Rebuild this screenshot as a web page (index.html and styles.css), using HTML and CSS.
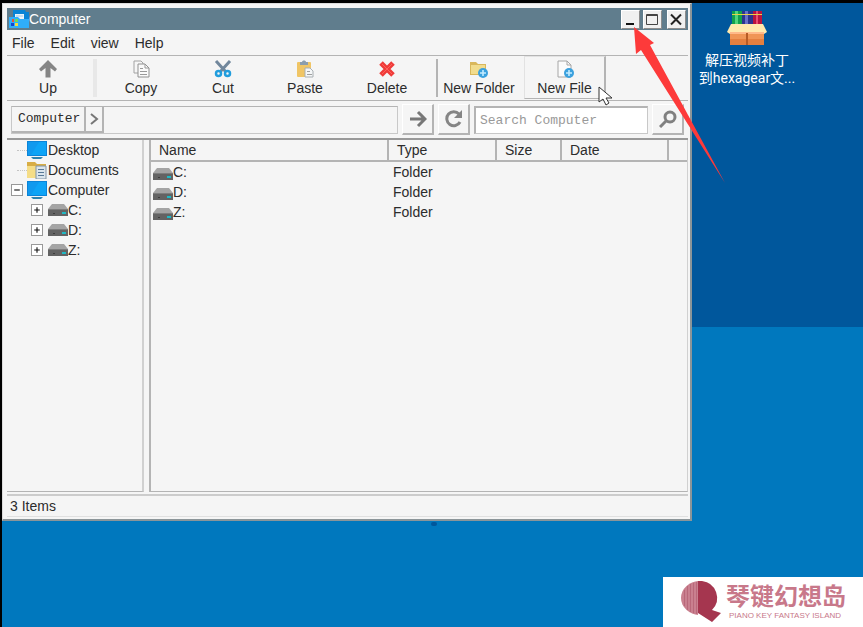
FILE: index.html
```html
<!DOCTYPE html>
<html lang="zh-CN">
  <head>
    <meta charset="UTF-8" />
    <meta name="viewport" content="width=device-width, initial-scale=1.0" />
    <title>Computer</title>
    <link rel="stylesheet" href="styles.css">
  </head>
  <body>
    <!-- shared icons -->
    <svg class="sprite" xmlns="http://www.w3.org/2000/svg">
      <symbol id="monitor" viewBox="0 0 20 18">
        <rect x="0" y="0" width="20" height="15" fill="#0b84d8" />
        <rect x="1" y="1" width="18" height="13" fill="#0ea4f6" />
        <path d="M1 1h11L4 14H1z" fill="#1199ee" />
        <path d="M4 16h12l-2 2H6z" fill="#2d83b0" />
      </symbol>
      <symbol id="drive" viewBox="0 0 20 12">
        <path d="M4 0h12l4 5H0z" fill="#a4a4a4" />
        <rect x="0" y="5" width="20" height="7" fill="#636363" />
        <rect x="0" y="5" width="20" height="1" fill="#7d7d7d" />
        <rect x="14" y="8" width="4" height="2" fill="#20b9c4" />
        <rect x="5" y="9" width="2" height="1" fill="#3d3d3d" />
      </symbol>
      <symbol id="plus-badge" viewBox="0 0 10 10">
        <circle cx="5" cy="5" r="5" fill="#3ba1de" />
        <path d="M5 2v6M2 5h6" stroke="#c4ecff" stroke-width="1.6" />
      </symbol>
    </svg>

    <main class="desktop">
      <section class="window">
        <header class="titlebar">
          <svg class="app-icon" viewBox="0 0 20 20">
            <path d="M4 1h12l1 2h3v12H4z" fill="#0784d6" />
            <path d="M6 5h9v5H6z" fill="#e7f3fb" />
            <path d="M7 7h7" stroke="#9ccbe8" />
            <path d="M0 8h9l2 2h9v9H0z" fill="#30aefa" />
            <path d="M3 10h2v3H3z" fill="#e5553b" />
            <path d="M6 10h3v3H6z" fill="#6bdc58" />
            <path d="M2 14h3v3H2z" fill="#1446cf" />
            <path d="M6 14h3v3H6z" fill="#f4dc3d" />
          </svg>
          <h1>Computer</h1>
          <div class="controls">
            <button type="button" aria-label="Minimize"><svg viewBox="0 0 16 16"><path d="M4 13h8" stroke="#111" stroke-width="2" /></svg></button>
            <button type="button" aria-label="Maximize"><svg viewBox="0 0 16 16"><path d="M2.500 3.500h11v10h-11zM2 4.500h12" fill="none" stroke="#444" /></svg></button>
            <button type="button" aria-label="Close" class="close"><svg viewBox="0 0 16 16"><path d="M3 3.500l10 10M13 3.500l-10 10" stroke="#222" stroke-width="2" /></svg></button>
          </div>
        </header>

        <nav class="menubar">
          <button type="button">File</button>
          <button type="button">Edit</button>
          <button type="button">view</button>
          <button type="button">Help</button>
        </nav>

        <div class="toolbar">
          <button type="button" class="tool">
            <svg viewBox="0 0 18 18"><path d="M9 0l9 9-2 2.500-4.500-3.500v9.500h-5V8L2 11.500 0 9z" fill="#858585" /></svg>
            Up
          </button>
          <span class="divider soft"></span>
          <button type="button" class="tool">
            <svg viewBox="0 0 18 18">
              <path d="M2 1h7l2 2v10H2z" fill="#f6f6f6" stroke="#a2a2a2" />
              <path d="M6 4h7l4 4v9H6z" fill="#fafafa" stroke="#909090" />
              <path d="M13 4v4h4M8 8.500h3M8 11.500h7M8 14.500h7" fill="none" stroke="#999" />
            </svg>
            Copy
          </button>
          <button type="button" class="tool">
            <svg viewBox="0 0 18 18">
              <path d="M2 1l10 11M16 1L6 12" stroke="#71879c" stroke-width="3" />
              <circle cx="4.500" cy="13.500" r="2.500" fill="none" stroke="#219ddd" stroke-width="2.500" />
              <circle cx="13.500" cy="13.500" r="2.500" fill="none" stroke="#219ddd" stroke-width="2.500" />
            </svg>
            Cut
          </button>
          <button type="button" class="tool">
            <svg viewBox="0 0 18 18">
              <rect x="1" y="2" width="14" height="15" rx="1" fill="#f0c565" />
              <path d="M4 2h2c0-2 4-2 4 0h2v3H4z" fill="#8b9dad" />
              <path d="M9 8h5l3 3v6H9z" fill="#f5f7f8" stroke="#a9afb3" />
              <path d="M11 11.500h3M11 14.500h5" stroke="#a0a0a0" />
            </svg>
            Paste
          </button>
          <button type="button" class="tool">
            <svg viewBox="0 0 18 18"><path d="M3 3l12 12M15 3L3 15" stroke="#ef3b39" stroke-width="5" /><path d="M4 4l10 10M14 4L4 14" stroke="#ff6059" stroke-width="1" /></svg>
            Delete
          </button>
          <span class="divider"></span>
          <button type="button" class="tool">
            <svg viewBox="0 0 18 18">
              <path d="M0 2h6l2 2h8v11H0z" fill="#d9b75b" />
              <path d="M1 5h14v9H1z" fill="#f1dc8d" />
              <use href="#plus-badge" x="8" y="8" width="10" height="10" />
            </svg>
            New Folder
          </button>
          <button type="button" class="tool hovered">
            <svg viewBox="0 0 18 18">
              <path d="M2 1h9l4 4v12H2z" fill="#fbfbfb" stroke="#a6a6a6" />
              <path d="M11 1v4h4" fill="none" stroke="#a6a6a6" />
              <use href="#plus-badge" x="8" y="8" width="10" height="10" />
            </svg>
            New File
          </button>
        </div>

        <div class="addressbar">
          <div class="path">
            <button type="button" class="crumb">Computer</button>
            <button type="button" class="crumb chevron" aria-label="Expand path"><svg viewBox="0 0 10 12"><path d="M2 1l6 5-6 5" fill="none" stroke="#777" stroke-width="2" /></svg></button>
          </div>
          <button type="button" class="square" aria-label="Go"><svg viewBox="0 0 18 18"><path d="M1 9h14M9 2l7 7-7 7" fill="none" stroke="#777" stroke-width="3" /></svg></button>
          <button type="button" class="square" aria-label="Refresh"><svg viewBox="0 0 18 18"><path d="M15 12a7 7 0 1 1-1-8" fill="none" stroke="#858585" stroke-width="3" /><path d="M17 0v8H9z" fill="#858585" /></svg></button>
          <input type="search" class="search" placeholder="Search Computer" aria-label="Search Computer" />
          <button type="button" class="square" aria-label="Search"><svg viewBox="0 0 18 18"><circle cx="11" cy="7" r="5" fill="none" stroke="#808080" stroke-width="3" /><path d="M7 11l-6 6" stroke="#808080" stroke-width="3" /></svg></button>
        </div>

        <div class="panes">
          <ul class="tree">
            <li><span class="stub"></span><svg class="node-icon"><use href="#monitor" /></svg>Desktop</li>
            <li>
              <span class="stub"></span>
              <svg class="node-icon" viewBox="0 0 20 18">
                <path d="M0 1h8l2 2h9v14H0z" fill="#d8ad45" />
                <path d="M0 5h17v12H0z" fill="#f5dd87" />
                <path d="M9 5h10v13H9z" fill="#dbe5ed" stroke="#8294a5" />
                <path d="M11 8.500h6M11 11.500h6M11 14.500h6" stroke="#587997" />
              </svg>Documents
            </li>
            <li class="root"><button type="button" class="toggle" aria-label="Collapse Computer"><svg viewBox="0 0 9 9"><path d="M2 4.500h5" stroke="#111" /></svg></button><svg class="node-icon"><use href="#monitor" /></svg>Computer</li>
            <li class="child"><button type="button" class="toggle" aria-label="Expand C:"><svg viewBox="0 0 9 9"><path d="M2 4.500h5M4.500 2v5" stroke="#111" /></svg></button><svg class="drive-icon"><use href="#drive" /></svg>C:</li>
            <li class="child"><button type="button" class="toggle" aria-label="Expand D:"><svg viewBox="0 0 9 9"><path d="M2 4.500h5M4.500 2v5" stroke="#111" /></svg></button><svg class="drive-icon"><use href="#drive" /></svg>D:</li>
            <li class="child"><button type="button" class="toggle" aria-label="Expand Z:"><svg viewBox="0 0 9 9"><path d="M2 4.500h5M4.500 2v5" stroke="#111" /></svg></button><svg class="drive-icon"><use href="#drive" /></svg>Z:</li>
          </ul>

          <div class="list">
            <table>
              <thead>
                <tr>
                  <th>Name</th>
                  <th class="col-type">Type</th>
                  <th class="col-size">Size</th>
                  <th class="col-date">Date</th>
                  <th class="col-rest"></th>
                </tr>
              </thead>
              <tbody>
                <tr><td><svg class="drive-icon"><use href="#drive" /></svg>C:</td><td>Folder</td><td></td><td></td><td></td></tr>
                <tr><td><svg class="drive-icon"><use href="#drive" /></svg>D:</td><td>Folder</td><td></td><td></td><td></td></tr>
                <tr><td><svg class="drive-icon"><use href="#drive" /></svg>Z:</td><td>Folder</td><td></td><td></td><td></td></tr>
              </tbody>
            </table>
          </div>
        </div>

        <footer class="statusbar">3 Items</footer>
      </section>

      <a href="#" class="shortcut">
        <svg viewBox="0 0 40 36">
          <rect x="5" y="1" width="10" height="20" fill="#13a04c" />
          <rect x="8" y="1" width="3" height="20" fill="#52d57c" />
          <rect x="15" y="1" width="11" height="20" fill="#2c348f" />
          <rect x="18" y="1" width="3" height="20" fill="#6970c9" />
          <rect x="26" y="1" width="9" height="20" fill="#b9143e" />
          <rect x="29" y="1" width="2" height="20" fill="#e94c70" />
          <path d="M5 4.500h30" stroke="#e6d04b" />
          <path d="M3 21h34v14H3z" fill="#f09556" />
          <path d="M3 29h34v6H3z" fill="#e47f3f" />
          <path d="M4 14h32l4 8-3 2-3-2H6l-3 2-3-2z" fill="#ffe9ad" />
          <path d="M3 23h34" stroke="#ffb98a" stroke-width="2" />
          <path d="M20 23v12" stroke="#b75b25" stroke-width="2" />
        </svg>
        <span>解压视频补丁<br>到hexagear文...</span>
      </a>

      <span class="speck"></span>
      <svg class="cursor" viewBox="0 0 16 20"><path d="M1 1v15l4-3 3 6 3-2-3-5h6z" fill="#fff" stroke="#333" /></svg>
      <svg class="pointer" viewBox="0 0 92 156"><path d="M1 0l20 16-4 2 75 138L8 23l-5 4z" fill="#fd3a3a" /></svg>

      <aside class="watermark">
        <svg viewBox="0 0 40 44">
          <defs><clipPath id="half"><rect x="0" y="0" width="17" height="44" /></clipPath></defs>
          <path d="M17 1h4a17 17 0 0 1 10 29l9 3-9 9-14-9z" fill="#a5364f" />
          <ellipse cx="19" cy="18" rx="19" ry="17" fill="#c9808f" clip-path="url(#half)" />
          <path d="M3.500 10v16M6.500 6v24M9.500 4v28M12.500 3v30M15.500 2v32" stroke="#b9687a" />
        </svg>
        <div class="brand">
          <strong>琴键幻想岛</strong>
          <small>PIANO KEY FANTASY ISLAND</small>
        </div>
      </aside>
    </main>
  </body>
</html>
```
FILE: styles.css
```css
:root {
  --face: #f5f5f5;
  --line: #b4b4b4;
  --dark-line: #999999;
  --title: #607d8d;
  --text: #2c2c2c;
}

* {
  box-sizing: border-box;
}

body {
  margin: 0;
  font-family: "Liberation Sans", "Noto Sans CJK SC", sans-serif;
  font-size: 14px;
  line-height: 20px;
  color: var(--text);
}

button {
  margin: 0;
  padding: 0;
  border: none;
  background: none;
  font: inherit;
  color: inherit;
}

svg {
  display: block;
  flex: none;
}

.sprite {
  position: absolute;
  width: 0;
  height: 0;
}

.desktop {
  position: relative;
  height: 100vh;
  overflow: hidden;
  border-top: 3px solid #000;
  border-left: 2px solid #000;
  background: linear-gradient(#00579c 52%, #0078be 52%);
}

/* file manager window */
.window {
  position: absolute;
  inset: 0 171px 106px 0;
  display: flex;
  flex-direction: column;
  padding: 4px 2px 2px 4px;
  border: 1px solid #dcdcdc;
  border-right: 2px solid #8b9599;
  border-bottom: 2px solid #8b9599;
  background: var(--face);
}

.titlebar {
  display: flex;
  align-items: center;
  height: 22px;
  padding: 0 2px;
  background: var(--title);
  color: #fff;
}

.app-icon {
  width: 20px;
  height: 20px;
}

.titlebar h1 {
  flex: 1;
  margin: 0;
  font-size: 14px;
  font-weight: normal;
}

.controls {
  display: flex;
  gap: 3px;
}

.controls button {
  width: 19px;
  height: 19px;
  border: 1px solid #fff;
  border-right-color: #8c8c8c;
  border-bottom-color: #8c8c8c;
  background: #f0f0f0;
}

.controls svg {
  width: 16px;
  height: 16px;
}

.controls .close {
  margin-left: 2px;
}

.menubar {
  display: flex;
  align-items: center;
  gap: 16px;
  height: 26px;
  padding: 0 5px;
  border-bottom: 1px solid var(--line);
}

.toolbar {
  display: flex;
  height: 45px;
  border-bottom: 1px solid var(--line);
}

.tool {
  display: flex;
  flex-direction: column;
  align-items: center;
  width: 82px;
  height: 43px;
  padding-top: 4px;
  white-space: nowrap;
}

.tool svg {
  width: 18px;
  height: 18px;
}

.tool.hovered {
  margin-left: 4px;
  border: 1px solid #e2e2e2;
  border-right: 2px solid var(--line);
  border-bottom-color: var(--line);
  padding-top: 3px;
}

.divider {
  width: 2px;
  height: 38px;
  margin: 3px 0 0 8px;
  background: var(--line);
}

.divider.soft {
  width: 4px;
  margin: 3px 3px 0 4px;
  background: #e8e8e8;
}

.addressbar {
  display: flex;
  align-items: center;
  gap: 4px;
  height: 37px;
  padding: 0 4px;
}

.path {
  display: flex;
  flex: 1;
  height: 28px;
  border: 1px solid #c8c8c8;
  border-top-color: var(--line);
}

.crumb {
  padding: 0 4px 0 6px;
  border-right: 2px solid var(--line);
  border-bottom: 2px solid var(--line);
  font-family: "Liberation Mono", monospace;
  font-size: 13px;
}

.crumb.chevron {
  padding: 0 3px;
}

.crumb svg {
  width: 10px;
  height: 12px;
}

.square {
  display: flex;
  align-items: center;
  justify-content: center;
  width: 32px;
  height: 31px;
  border: 1px solid #fff;
  border-right: 2px solid var(--line);
  border-bottom: 2px solid var(--line);
}

.square svg {
  width: 18px;
  height: 18px;
}

.search {
  width: 174px;
  height: 28px;
  padding: 0 4px;
  border: 1px solid #c8c8c8;
  border-top: 2px solid var(--line);
  border-left: 2px solid var(--line);
  border-radius: 0;
  background: #fff;
  font-family: "Liberation Mono", monospace;
  font-size: 13px;
}

.search::placeholder {
  color: #999;
}

/* tree and file list */
.panes {
  display: flex;
  flex: 1;
  gap: 5px;
  min-height: 0;
  border-top: 2px solid var(--dark-line);
}

.tree {
  width: 137px;
  margin: 0;
  padding: 0;
  border-right: 2px solid #d0d0d0;
  border-bottom: 1px solid var(--line);
  list-style: none;
}

.tree li {
  display: flex;
  align-items: center;
  height: 20px;
  padding-left: 10px;
}

.tree .root {
  padding-left: 4px;
}

.tree .child {
  padding-left: 24px;
}

.stub {
  width: 10px;
  border-top: 1px dotted #c4c4c4;
}

.node-icon {
  width: 20px;
  height: 18px;
  margin-right: 1px;
}

.root .node-icon {
  margin-left: 4px;
}

.toggle {
  width: 12px;
  height: 12px;
  border: 1px solid #999;
  background: #fff;
}

.toggle svg {
  width: 10px;
  height: 10px;
}

.drive-icon {
  width: 20px;
  height: 12px;
}

.child .drive-icon {
  margin-left: 5px;
}

.list {
  flex: 1;
  border-left: 2px solid var(--line);
  border-right: 1px solid #d0d0d0;
  border-bottom: 1px solid var(--line);
}

table {
  width: 100%;
  table-layout: fixed;
  border-collapse: separate;
  border-spacing: 0;
}

th {
  height: 22px;
  padding: 0 8px;
  border-right: 2px solid var(--line);
  border-bottom: 2px solid var(--line);
  font-weight: normal;
  text-align: left;
}

td {
  height: 20px;
  padding: 0 4px;
}

td:first-child {
  padding: 0 2px;
}

td .drive-icon {
  display: inline-block;
  vertical-align: -3px;
}

.col-type {
  width: 108px;
}

.col-size {
  width: 65px;
}

.col-date {
  width: 107px;
}

.col-rest {
  width: 18px;
  border-right: none;
  padding: 0;
}

.statusbar {
  height: 23px;
  margin-top: 2px;
  border-top: 2px solid #cccccc;
  border-bottom: 1px solid #e0e0e0;
  padding: 0 3px;
}

/* things lying on the desktop */
.shortcut {
  position: absolute;
  top: 7px;
  right: 66px;
  display: flex;
  flex-direction: column;
  align-items: center;
  gap: 5px;
  width: 100px;
  color: #fff;
  font-family: Roboto, "Noto Sans CJK SC", sans-serif;
  line-height: 18px;
  text-align: center;
  text-decoration: none;
  white-space: nowrap;
}

.shortcut svg {
  width: 40px;
  height: 36px;
}

.speck {
  position: absolute;
  top: 519px;
  left: 429px;
  width: 6px;
  height: 4px;
  border-radius: 2px;
  background: #00579c;
}

.cursor {
  position: absolute;
  top: 83px;
  left: 596px;
  width: 16px;
  height: 20px;
}

.pointer {
  position: absolute;
  top: 24px;
  left: 631px;
  width: 92px;
  height: 156px;
}

.watermark {
  position: absolute;
  right: 0;
  bottom: 0;
  display: flex;
  align-items: center;
  gap: 5px;
  width: 200px;
  height: 50px;
  padding-left: 18px;
  background: #fff;
}

.watermark svg {
  width: 40px;
  height: 44px;
}

.brand {
  display: flex;
  flex-direction: column;
  color: #c8788a;
  white-space: nowrap;
}

.brand strong {
  font-size: 24px;
  line-height: 28px;
}

.brand small {
  padding-left: 3px;
  font-size: 8px;
  line-height: 10px;
}
```
